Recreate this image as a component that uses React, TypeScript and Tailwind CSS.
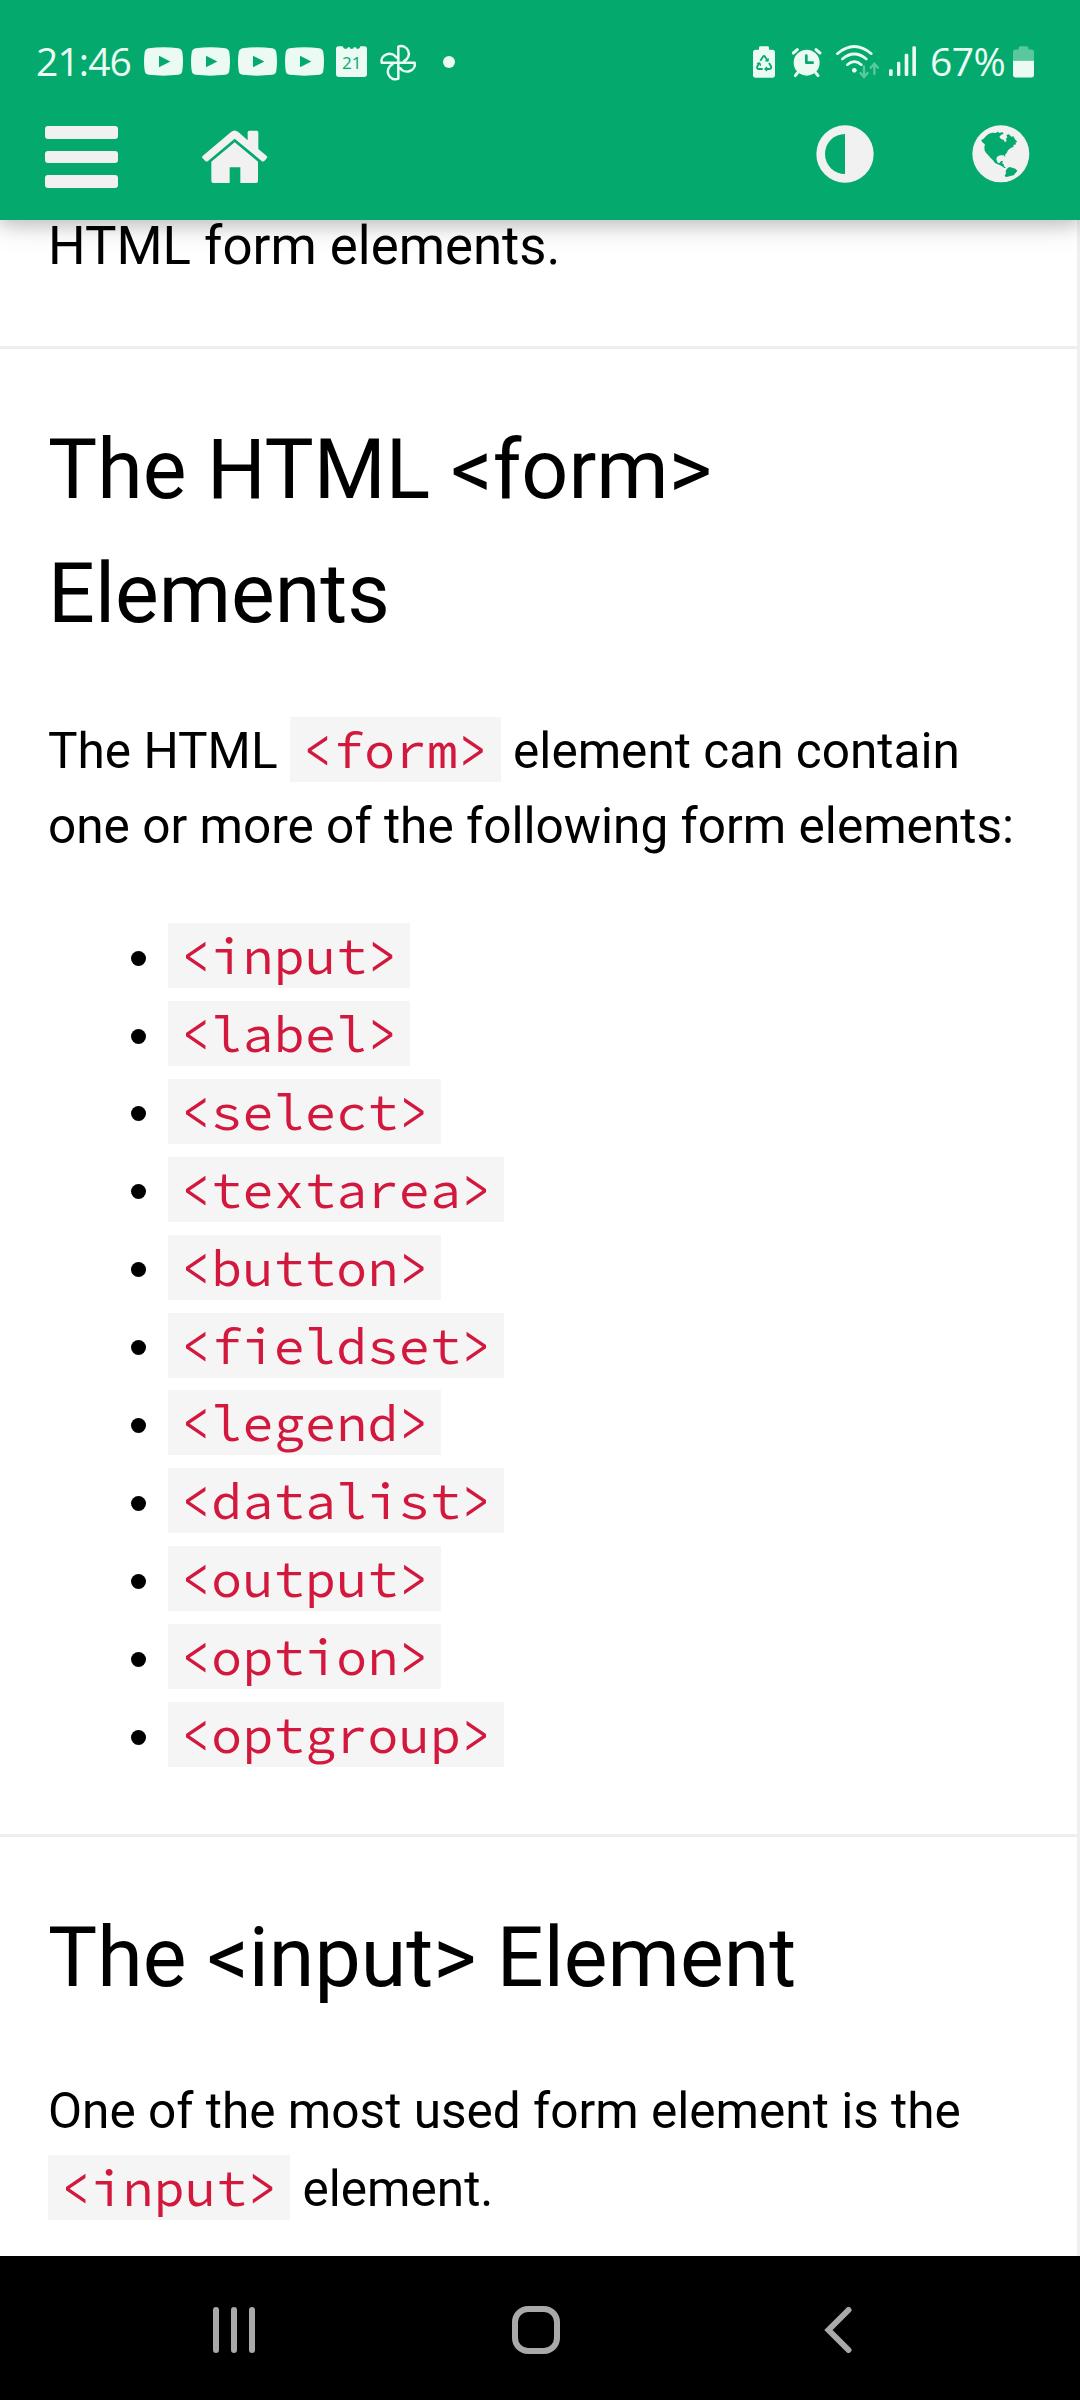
import type { ReactNode } from "react";

const TAGS = [
  "input",
  "label",
  "select",
  "textarea",
  "button",
  "fieldset",
  "legend",
  "datalist",
  "output",
  "option",
  "optgroup",
];

function Code({ children }: { children: ReactNode }) {
  return (
    <code className="bg-[#f5f5f5] px-[11.7px] font-['Source_Code_Pro','Noto_Sans_Mono',monospace] text-[52.1px] text-[#d3183d]">
      {children}
    </code>
  );
}

function Heading({ children }: { children: ReactNode }) {
  return <h2 className="mt-[59px] text-[82.5px] leading-[1.5] font-normal">{children}</h2>;
}

function Rule() {
  return <div className="-mx-12 h-[3px] bg-[#eeeeee]" />;
}

function YouTube() {
  return (
    <svg className="h-[29px] w-[39px] shrink-0" viewBox="0 0 117 86" fill="#ebfaf3">
      <path
        fillRule="evenodd"
        d="M14 3Q58 -2 103 3Q114 5 115 16Q119 43 115 70Q114 81 103 83Q58 88 14 83Q3 81 2 70Q-2 43 2 16Q3 5 14 3ZM45 26V60L79 43Z"
      />
    </svg>
  );
}

function Calendar() {
  return (
    <svg className="ml-3 h-[31px] w-[31px] shrink-0" viewBox="0 0 93 93">
      <path
        d="M8 1H20Q22 9 28 9Q34 9 36 4H41Q42 9 47 9Q52 9 54 4H59Q61 9 66 9Q72 9 73 1H85Q93 1 93 9V84Q93 93 84 93H9Q0 93 0 84V9Q0 1 8 1Z"
        fill="#ebfaf3"
      />
      <text x="47" y="69" textAnchor="middle" fontFamily="Open Sans, sans-serif" fontSize="51" fill="#04aa6d">
        21
      </text>
    </svg>
  );
}

function Pinwheel() {
  return (
    <svg
      className="ml-[3px] h-[50px] w-[60px] shrink-0"
      viewBox="0 0 180 150"
      fill="none"
      stroke="#ebfaf3"
      strokeWidth="7.5"
      strokeLinejoin="round"
    >
      <path d="M85 77V29A22 23 0 0 1 103 72L99 77M84 77H134A24 22 0 0 1 90 93L85 89M85 77V125A22 23 0 0 1 67 82L71 77M85 77H35A24 22 0 0 1 79 61L85 65" />
    </svg>
  );
}

function SystemIcons() {
  return (
    <svg className="h-[50px] w-[140px] shrink-0" viewBox="0 0 420 150" fill="#ebfaf3">
      <path d="M32 38H42V32Q42 28 46 28H68Q72 28 72 32V38H82Q90 38 90 46V114Q90 122 82 122H32Q24 122 24 114V46Q24 38 32 38Z" />
      <g fill="none" stroke="#04aa6d" strokeWidth="5.5" strokeLinejoin="round">
        <path d="M46 71L54 59Q57 55 60 59L68 71M72 78L78 88Q80 96 73 96H61M53 96H41Q34 95 37 88L43 79" />
        <path d="M36 80L44 78L47 86M61 71L69 72L70 64M66 90L60 96L66 102" strokeWidth="4" />
      </g>
      <circle cx="185" cy="77" r="39" />
      <path
        d="M184 56V77H203"
        fill="none"
        stroke="#04aa6d"
        strokeWidth="8"
        strokeLinecap="round"
        strokeLinejoin="round"
      />
      <path
        d="M145 48L157 38M213 38L225 48M158 107L151 116M212 107L219 116"
        stroke="#ebfaf3"
        strokeWidth="9"
        strokeLinecap="round"
      />
      <circle cx="328" cy="100" r="7" />
      <g fill="none" strokeLinecap="round">
        <path
          d="M277 50Q328 7 379 50M292 66Q328 36 364 66M307 83Q328 65 349 83"
          stroke="#ebfaf3"
          strokeWidth="8"
        />
        <path
          d="M357 88V119M346 108L357 120L368 108M388 111V82M377 92L388 80L399 92"
          stroke="#5cc89e"
          strokeWidth="7"
        />
      </g>
    </svg>
  );
}

function Signal() {
  return (
    <svg className="mb-[2px] ml-1 h-[30px] w-[27px] shrink-0" viewBox="0 0 81 90" fill="#ebfaf3">
      <rect x="0" y="70" width="11" height="20" rx="4" />
      <rect x="24" y="47" width="10" height="43" rx="4" />
      <rect x="47" y="23" width="11" height="67" rx="4" />
      <rect x="70" y="1" width="11" height="89" rx="4" />
    </svg>
  );
}

function Battery() {
  return (
    <svg className="h-8 w-[21px] shrink-0" viewBox="0 0 63 95">
      <path d="M8 10H17V5Q17 0 22 0H41Q46 0 46 5V10H55Q63 10 63 18V44H0V18Q0 10 8 10Z" fill="#59c89d" />
      <path d="M0 44H63V86Q63 94 55 94H8Q0 94 0 86Z" fill="#ebfaf3" />
    </svg>
  );
}

function StatusBar() {
  return (
    <div className="flex h-[123px] items-center pr-[46px] pl-9">
      <span className="w-[108px] shrink-0 pb-[3px] font-['Open_Sans',sans-serif] text-[39px] leading-none tracking-[-0.9px] whitespace-nowrap text-[#ebfaf3]">
        21:46
      </span>
      <div className="flex gap-2">
        <YouTube />
        <YouTube />
        <YouTube />
        <YouTube />
      </div>
      <Calendar />
      <Pinwheel />
      <span className="ml-[13px] h-3 w-3 rounded-full bg-[#ebfaf3]" />
      <div className="ml-auto flex items-center">
        <SystemIcons />
        <Signal />
        <span className="w-[97px] shrink-0 pb-[3px] pl-[14px] font-['Open_Sans',sans-serif] text-[39px] leading-none tracking-[-0.5px] whitespace-nowrap text-[#ebfaf3]">
          67%
        </span>
        <Battery />
      </div>
    </div>
  );
}

function SiteNav() {
  return (
    <div className="flex items-start pr-[50px] pl-[45px] text-[#f1f1f1]">
      <div className="mt-[3px] flex w-[73px] flex-col gap-3">
        <span className="h-[12.5px] rounded-[3px] bg-[#f1f1f1]" />
        <span className="h-[12.5px] rounded-[3px] bg-[#f1f1f1]" />
        <span className="h-[12.5px] rounded-[3px] bg-[#f1f1f1]" />
      </div>
      <svg className="mt-[7px] ml-[84px] h-[54px] w-[66px]" viewBox="20 24 198 162" fill="currentColor">
        <path d="M21 103L107 30Q118 21 129 30L157 55V31Q157 26 162 26H184Q189 26 189 31V81L215 103Q217 106 214 109L207 117Q203 120 199 117L118 50L38 117Q34 120 30 117L22 109Q19 106 21 103Z" />
        <path d="M118 61L188 119V177Q188 183 182 183H135V136H103V183H54Q48 183 48 177V119Z" />
      </svg>
      <svg className="mt-[2px] ml-auto h-[58px] w-[58px]" viewBox="0 0 174 174">
        <circle cx="87" cy="87" r="86" fill="currentColor" />
        <path d="M87 27A60 60 0 0 0 87 147Z" fill="#04aa6d" />
      </svg>
      <svg className="mt-[2px] ml-[98px] h-[58px] w-[58px]" viewBox="17 15 174 174">
        <circle cx="103.5" cy="101.5" r="85.5" fill="currentColor" />
        <g fill="#04aa6d">
          <path d="M47 66L45 60L52 56L60 47L68 41L78 38L88 39L94 35L100 39L108 36L112 41L105 44L99 50L103 56L112 60L116 67L121 63L119 56L123 52L120 45L128 43L135 50L141 49L146 58L153 66L147 68L150 73L141 75L142 80L133 84L125 91L121 99L116 104L117 112L112 106L101 106L92 110L90 118L94 128L100 129L104 123L110 123L107 130L112 132L113 139L119 144L114 144L106 138L98 134L86 129L80 121L72 113L68 108L60 100L55 92L54 80L56 74L52 70Z" />
          <path d="M121 147L129 141L138 143L147 146L153 152L147 160L142 166L132 168L124 170L118 171L115 166L119 161L118 154Z" />
        </g>
      </svg>
    </div>
  );
}

function SystemNav() {
  return (
    <div className="flex h-36 shrink-0 items-center bg-black pt-1 pl-[213px]">
      <div className="flex gap-3">
        <span className="h-[46px] w-[6px] rounded-full bg-[#a9a9a9]" />
        <span className="h-[46px] w-[6px] rounded-full bg-[#a9a9a9]" />
        <span className="h-[46px] w-[6px] rounded-full bg-[#a9a9a9]" />
      </div>
      <span className="ml-[257px] h-12 w-12 rounded-[16px] border-[6px] border-[#a9a9a9]" />
      <svg
        className="ml-[264px] h-[46px] w-7"
        viewBox="0 0 28 46"
        fill="none"
        stroke="#a9a9a9"
        strokeWidth="6"
        strokeLinecap="round"
        strokeLinejoin="miter"
      >
        <path d="M24.5 3L4.5 23L24.5 43" />
      </svg>
    </div>
  );
}

export default function App() {
  return (
    <div className="flex h-[2400px] w-[1080px] flex-col overflow-hidden bg-white font-['Roboto',sans-serif] text-black">
      <header className="relative z-10 h-[220px] shrink-0 bg-[#04aa6d] shadow-[0_6px_15px_rgba(0,0,0,0.16),0_6px_30px_rgba(0,0,0,0.12)]">
        <StatusBar />
        <SiteNav />
      </header>

      <main className="min-h-0 flex-1 border-r-[3px] border-[#efefef] px-12 text-[49.55px] leading-[1.5]">
        <p className="-mt-[13px] mb-[60px] text-[52.8px]">HTML form elements.</p>
        <Rule />
        <Heading>
          The HTML &lt;form&gt;
          <br />
          Elements
        </Heading>
        <p className="mt-[55px] whitespace-nowrap">
          The HTML <Code>&lt;form&gt;</Code> element can contain
          <br />
          one or more of the following form elements:
        </p>
        <ul className="mt-[54px] mb-[60px]">
          {TAGS.map((tag) => (
            <li key={tag} className="flex h-[77.9px] items-start">
              <span className="mt-[33.5px] mr-[22px] ml-[83px] h-[15px] w-[15px] rounded-full bg-black" />
              <div>
                <Code>&lt;{tag}&gt;</Code>
              </div>
            </li>
          ))}
        </ul>
        <Rule />
        <Heading>The &lt;input&gt; Element</Heading>
        <p className="mt-[54.5px] whitespace-nowrap">
          One of the most used form element is the
          <br />
          <Code>&lt;input&gt;</Code> element.
        </p>
      </main>

      <SystemNav />
    </div>
  );
}
